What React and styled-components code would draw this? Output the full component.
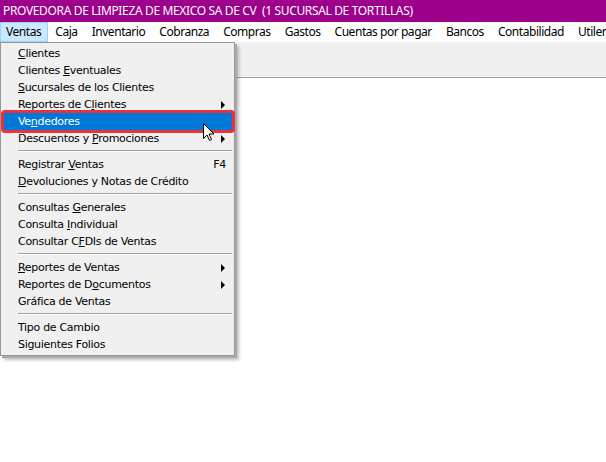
import React from "react";
import styled, { createGlobalStyle } from "styled-components";

const GlobalStyle = createGlobalStyle`
  html, body {
    margin: 0;
    padding: 0;
    background: #fff;
  }
  body {
    font-family: "Noto Sans", "Liberation Sans", sans-serif;
    overflow: hidden;
  }
`;

const Window = styled.div`
  position: relative;
  width: 606px;
  height: 462px;
  background: #fff;
  overflow: hidden;
`;

const TitleBar = styled.div`
  height: 22px;
  background: #9d008a;
  color: #fff;
  font-size: 12px;
  line-height: 22px;
  padding-left: 3px;
  white-space: pre;
  letter-spacing: -0.35px;
`;

const MenuBar = styled.div`
  display: flex;
  height: 20px;
  background: #fff;
  white-space: nowrap;
`;

const TopItem = styled.div`
  font-size: 12px;
  line-height: 18px;
  padding: 0 6px 0 5px;
  margin-right: 1px;
  border: 1px solid ${(p) => (p.active ? "#99d1ff" : "transparent")};
  background: ${(p) => (p.active ? "#cce8ff" : "transparent")};
  color: #000;
  letter-spacing: -0.45px;
`;

const Toolbar = styled.div`
  height: 35px;
  background: #f0f0f0;
  border-bottom: 1px solid #a0a0a0;
`;

const Dropdown = styled.div`
  position: absolute;
  left: 0;
  top: 42px;
  width: 233px;
  padding: 2px 0 2px;
  background: #f0f0f0;
  border: 1px solid #979797;
  box-shadow: 2px 2px 0 #a9a9a9, 4px 4px 3px rgba(0, 0, 0, 0.25);
  font-family: "DejaVu Sans", Tahoma, sans-serif;
  font-size: 11px;
`;

const Item = styled.div`
  position: relative;
  display: flex;
  align-items: center;
  height: 17px;
  margin: 0 2px;
  padding-left: 15px;
  padding-right: 5px;
  color: ${(p) => (p.selected ? "#fff" : "#000")};
  background: ${(p) => (p.selected ? "#0078d7" : "transparent")};
  letter-spacing: -0.3px;
`;

const Label = styled.span`
  flex: 1;
  white-space: nowrap;
`;

const Key = styled.span`
  font-size: 11px;
  margin-right: 1px;
`;

const Arrow = styled.span`
  width: 0;
  height: 0;
  border-top: 4px solid transparent;
  border-bottom: 4px solid transparent;
  border-left: 4px solid #000;
  margin-right: 2px;
`;

const Separator = styled.div`
  height: 0;
  margin: 3px 2px 4px 17px;
  border-top: 1px solid #a0a0a0;
  border-bottom: 1px solid #fff;
`;

const Mark = styled.div`
  position: absolute;
  left: -2px;
  top: -3px;
  right: -3px;
  bottom: -3px;
  border: 3px solid #e8333d;
  border-radius: 4px;
`;

const Pointer = styled.svg`
  position: absolute;
  left: 203px;
  top: 123px;
`;

const menu = [
  { t: "Clientes", u: 0 },
  { t: "Clientes Eventuales", u: 9 },
  { t: "Sucursales de los Clientes", u: 0 },
  { t: "Reportes de Clientes", u: 13, sub: true },
  { t: "Vendedores", u: 2, selected: true },
  { t: "Descuentos y Promociones", u: 13, sub: true },
  "-",
  { t: "Registrar Ventas", u: 10, key: "F4" },
  { t: "Devoluciones y Notas de Crédito", u: 0 },
  "-",
  { t: "Consultas Generales", u: 10 },
  { t: "Consulta Individual", u: 9 },
  { t: "Consultar CFDIs de Ventas", u: 11 },
  "-",
  { t: "Reportes de Ventas", u: 0, sub: true },
  { t: "Reportes de Documentos", u: 13, sub: true },
  { t: "Gráfica de Ventas", u: -1 },
  "-",
  { t: "Tipo de Cambio", u: -1 },
  { t: "Siguientes Folios", u: -1 },
];

const top = [
  "Ventas",
  "Caja",
  "Inventario",
  "Cobranza",
  "Compras",
  "Gastos",
  "Cuentas por pagar",
  "Bancos",
  "Contabilidad",
  "Utilerías",
];

// underline the accelerator letter
function Accel({ text, at }) {
  if (at < 0) return text;
  return (
    <>
      {text.slice(0, at)}
      <u>{text[at]}</u>
      {text.slice(at + 1)}
    </>
  );
}

export default function App() {
  return (
    <Window>
      <GlobalStyle />
      <TitleBar>PROVEDORA DE LIMPIEZA DE MEXICO SA DE CV  (1 SUCURSAL DE TORTILLAS)</TitleBar>
      <MenuBar>
        {top.map((m, i) => (
          <TopItem key={m} active={i === 0}>
            {m}
          </TopItem>
        ))}
      </MenuBar>
      <Toolbar />

      <Dropdown>
        {menu.map((m, i) =>
          m === "-" ? (
            <Separator key={i} />
          ) : (
            <Item key={i} selected={m.selected}>
              <Label>
                <Accel text={m.t} at={m.u} />
              </Label>
              {m.key && <Key>{m.key}</Key>}
              {m.sub && <Arrow />}
              {m.selected && <Mark />}
            </Item>
          )
        )}
      </Dropdown>

      <Pointer width="13" height="19" viewBox="0 0 13 19">
        <path
          d="M0.5 0.5 L0.5 15.5 L4 12 L6.5 17.5 L8.5 16.5 L6 11 L11 11 Z"
          fill="#fff"
          stroke="#000"
          strokeWidth="1"
          strokeLinejoin="miter"
        />
      </Pointer>
    </Window>
  );
}
